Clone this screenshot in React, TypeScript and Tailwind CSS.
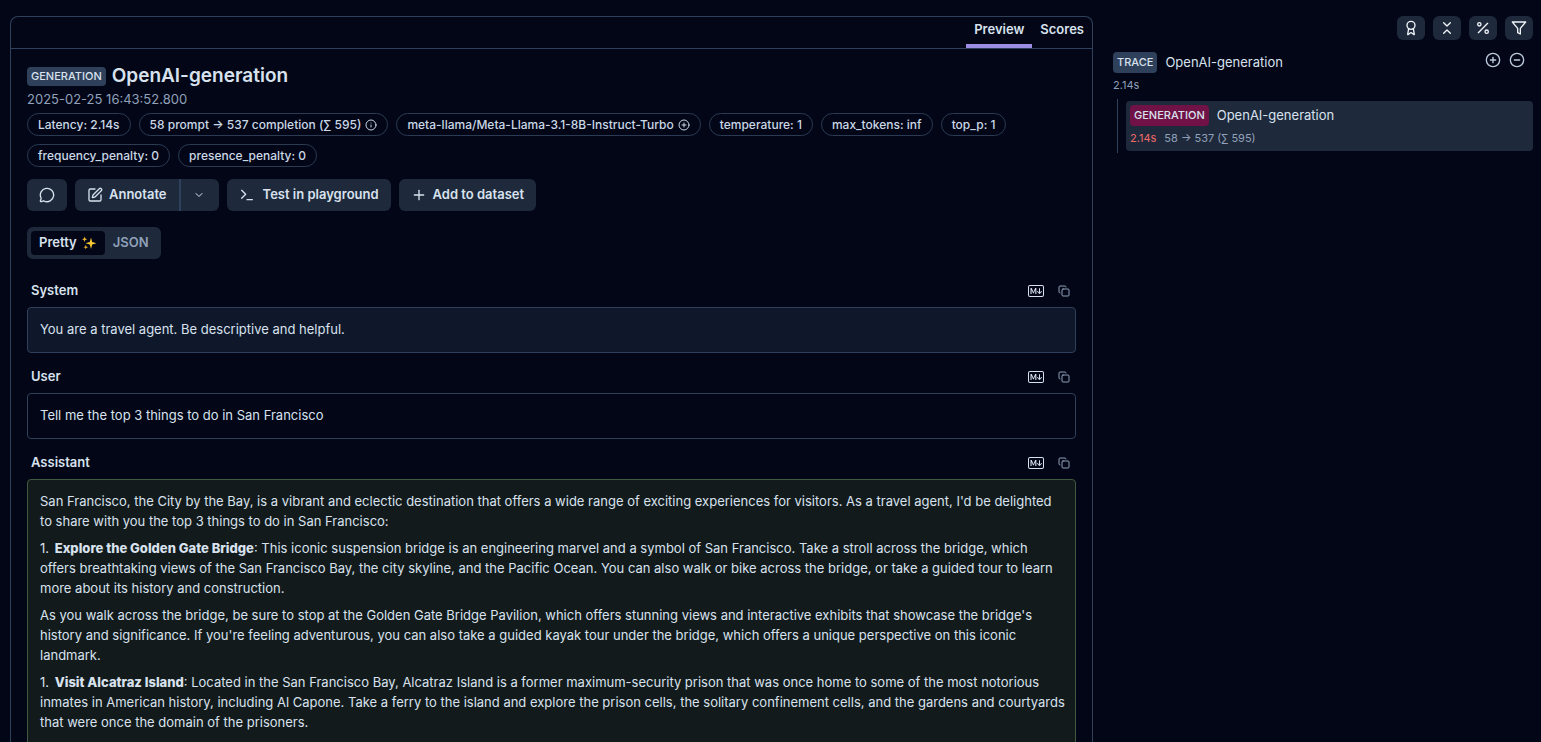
import type { ReactNode } from 'react';
import {
  Award,
  ChevronDown,
  ChevronsDownUp,
  CircleMinus,
  CirclePlus,
  Copy,
  Info,
  MessageCircle,
  Percent,
  Plus,
  SquarePen,
  Terminal,
} from 'lucide-react';
import { BsMarkdown } from 'react-icons/bs';

type MessageProps = {
  role: string;
  tone: string;
  children: ReactNode;
};

function Filter({ className }: { className?: string }) {
  return (
    <svg
      viewBox="0 0 24 24"
      fill="none"
      stroke="currentColor"
      strokeWidth="2"
      strokeLinecap="round"
      strokeLinejoin="round"
      className={className}
      aria-hidden="true"
    >
      <polygon points="22 3 2 3 10 12.46 10 19 14 21 14 12.46 22 3" />
    </svg>
  );
}

const toolbar = [
  { label: 'Scores', icon: Award },
  { label: 'Collapse all', icon: ChevronsDownUp },
  { label: 'Metrics', icon: Percent },
  { label: 'Filter', icon: Filter },
];

function Pill({ children }: { children: ReactNode }) {
  return (
    <span className="flex h-[23px] items-center gap-1 rounded-full border border-[#2b3b53] px-2.5 text-xs font-medium">
      {children}
    </span>
  );
}

function Sparkles() {
  return (
    <svg viewBox="0 0 16 16" className="size-4" aria-hidden="true">
      <path fill="#fcc934" d="M10 2.5 11.2 7 15.5 8.3 11.2 9.6 10 14 8.8 9.6 4.5 8.3 8.8 7Z" />
      <path fill="#f5b82e" d="M3.6 1.5 4.3 3.6 6.2 4.3 4.3 5 3.6 7 2.9 5 1 4.3 2.9 3.6Z" />
      <path fill="#f5b82e" d="M4.8 9.8 5.4 11.6 7.1 12.2 5.4 12.8 4.8 14.6 4.2 12.8 2.5 12.2 4.2 11.6Z" />
    </svg>
  );
}

function Lead({ children }: { children: ReactNode }) {
  return <strong className="ml-0.5 font-extrabold">{children}</strong>;
}

function Message({ role, tone, children }: MessageProps) {
  return (
    <section>
      <div className="flex h-8 items-center justify-between px-1">
        <h3 className="text-[13px] font-semibold">{role}</h3>
        <div className="flex items-center gap-3">
          <button type="button" aria-label="Toggle markdown">
            <BsMarkdown className="size-4" />
          </button>
          <button type="button" aria-label="Copy" className="px-0.5 text-slate-400">
            <Copy className="size-3" />
          </button>
        </div>
      </div>
      <div className={`flex flex-col gap-[7px] rounded-sm border px-3 pt-[11px] pb-[13px] text-[13px] leading-5 ${tone}`}>
        {children}
      </div>
    </section>
  );
}

function Preview() {
  return (
    <main className="min-w-0 rounded-t-lg border border-b-0 border-[#2f405a]">
      <div role="tablist" className="flex h-8 justify-end border-b border-[#2f405a] text-[13px] font-semibold">
        <button type="button" role="tab" aria-selected="true" className="border-b-4 border-[#9d8ce4] px-2 pb-0.5">
          Preview
        </button>
        <button type="button" role="tab" aria-selected="false" className="border-b-4 border-transparent px-2 pb-0.5">
          Scores
        </button>
      </div>
      <div className="px-4 pt-4">
        <header>
          <div className="flex h-[22px] items-center gap-1.5">
            <span className="rounded-sm bg-[#2f405a] px-1 text-[11px] leading-[19px] font-medium">GENERATION</span>
            <h1 className="text-[19px] font-semibold">OpenAI-generation</h1>
          </div>
          <p className="mt-0.5 text-[13px] leading-5 text-slate-400">2025-02-25 16:43:52.800</p>
          <div className="mt-1 flex flex-wrap gap-2 text-[#cbd8e6]">
            <Pill>Latency: 2.14s</Pill>
            <Pill>
              58 prompt → 537 completion (∑ 595)
              <Info className="size-3" />
            </Pill>
            <Pill>
              meta-llama/Meta-Llama-3.1-8B-Instruct-Turbo
              <CirclePlus className="size-3" />
            </Pill>
            <Pill>temperature: 1</Pill>
            <Pill>max_tokens: inf</Pill>
            <Pill>top_p: 1</Pill>
            <Pill>frequency_penalty: 0</Pill>
            <Pill>presence_penalty: 0</Pill>
          </div>
        </header>
        <div className="mt-3 flex h-8 gap-2 text-[13px] font-semibold">
          <button type="button" aria-label="Comments" className="rounded-md bg-[#1e293b] px-3">
            <MessageCircle className="size-4" />
          </button>
          <div className="flex">
            <button type="button" className="flex items-center gap-1.5 rounded-l-md bg-[#1e293b] px-3">
              <SquarePen className="size-4" />
              Annotate
            </button>
            <button
              type="button"
              aria-label="Annotation queues"
              className="w-10 rounded-r-md border-l-2 border-[#2f405a] bg-[#1e293b] px-3"
            >
              <ChevronDown className="size-3" />
            </button>
          </div>
          <button type="button" className="flex items-center gap-2 rounded-md bg-[#1e293b] px-3">
            <Terminal className="size-4" />
            Test in playground
          </button>
          <button type="button" className="flex items-center gap-1.5 rounded-md bg-[#1e293b] px-3">
            <Plus className="size-4" />
            Add to dataset
          </button>
        </div>
        <div role="tablist" className="mt-4 flex h-8 w-fit rounded-md bg-[#1e293b] p-1 text-[13px] font-semibold">
          <button type="button" role="tab" aria-selected="true" className="flex items-center gap-1 rounded-sm bg-[#020617] px-2">
            Pretty
            <Sparkles />
          </button>
          <button type="button" role="tab" aria-selected="false" className="px-2 text-slate-400">
            JSON
          </button>
        </div>
        <div className="mt-4 flex flex-col gap-2">
          <Message role="System" tone="border-[#2f405a] bg-[#0f172a]">
            <p>You are a travel agent. Be descriptive and helpful.</p>
          </Message>
          <Message role="User" tone="border-[#2f405a]">
            <p>Tell me the top 3 things to do in San Francisco</p>
          </Message>
          <Message role="Assistant" tone="border-[#3f5a3f] bg-[#131a1c]">
            <p>
              San Francisco, the City by the Bay, is a vibrant and eclectic destination that offers a wide range of
              exciting experiences for visitors. As a travel agent, I'd be delighted to share with you the top 3 things
              to do in San Francisco:
            </p>
            <p>
              1. <Lead>Explore the Golden Gate Bridge</Lead>: This iconic suspension bridge is an engineering marvel
              and a symbol of San Francisco. Take a stroll across the bridge, which offers breathtaking views of the San
              Francisco Bay, the city skyline, and the Pacific Ocean. You can also walk or bike across the bridge, or
              take a guided tour to learn more about its history and construction.
            </p>
            <p>
              As you walk across the bridge, be sure to stop at the Golden Gate Bridge Pavilion, which offers stunning
              views and interactive exhibits that showcase the bridge's history and significance. If you're feeling
              adventurous, you can also take a guided kayak tour under the bridge, which offers a unique perspective on
              this iconic landmark.
            </p>
            <p className="-mr-2">
              1. <Lead>Visit Alcatraz Island</Lead>: Located in the San Francisco Bay, Alcatraz Island is a former
              maximum-security prison that was once home to some of the most notorious inmates in American history,
              including Al Capone. Take a ferry to the island and explore the prison cells, the solitary confinement
              cells, and the gardens and courtyards that were once the domain of the prisoners.
            </p>
          </Message>
        </div>
      </div>
    </main>
  );
}

function TraceTree() {
  return (
    <aside className="min-w-0">
      <div className="flex justify-end gap-2">
        {toolbar.map(({ label, icon: Icon }) => (
          <button
            key={label}
            type="button"
            aria-label={label}
            className="flex h-6 w-7 items-center justify-center rounded-md bg-[#1e293b] text-slate-100"
          >
            <Icon className="size-4" />
          </button>
        ))}
      </div>
      <div className="mt-3 flex items-start justify-between">
        <div className="flex items-center gap-2 text-[13px]">
          <span className="rounded-sm bg-[#2f405a] px-1 text-[11px] leading-[21px] font-medium">TRACE</span>
          OpenAI-generation
        </div>
        <div className="flex gap-2 pr-2 text-[#bdcbdc]">
          <button type="button" aria-label="Expand all">
            <CirclePlus className="size-4" />
          </button>
          <button type="button" aria-label="Collapse all">
            <CircleMinus className="size-4" />
          </button>
        </div>
      </div>
      <p className="mt-1 text-[11px] leading-4 text-slate-400">2.14s</p>
      <div className="mt-1.5 ml-1 border-l border-[#2f405a] py-0.5 pl-2">
        <button type="button" className="w-full rounded-sm bg-[#1e293b] p-1 text-left">
          <span className="flex items-center gap-2 text-[13px]">
            <span className="rounded-sm bg-[#701245] px-1 text-[11px] leading-[21px] font-medium">GENERATION</span>
            OpenAI-generation
          </span>
          <span className="mt-1 flex gap-2 text-[11px] leading-[17px] text-slate-400">
            <span className="text-[#f16a6a]">2.14s</span>
            58 → 537 (∑ 595)
          </span>
        </button>
      </div>
    </aside>
  );
}

export default function App() {
  return (
    <div className="grid h-screen grid-cols-[1083fr_420fr] gap-5 overflow-hidden bg-[#020617] pt-4 pr-2 pl-2.5 font-['Inter',sans-serif] text-[#d8e2ee]">
      <Preview />
      <TraceTree />
    </div>
  );
}
